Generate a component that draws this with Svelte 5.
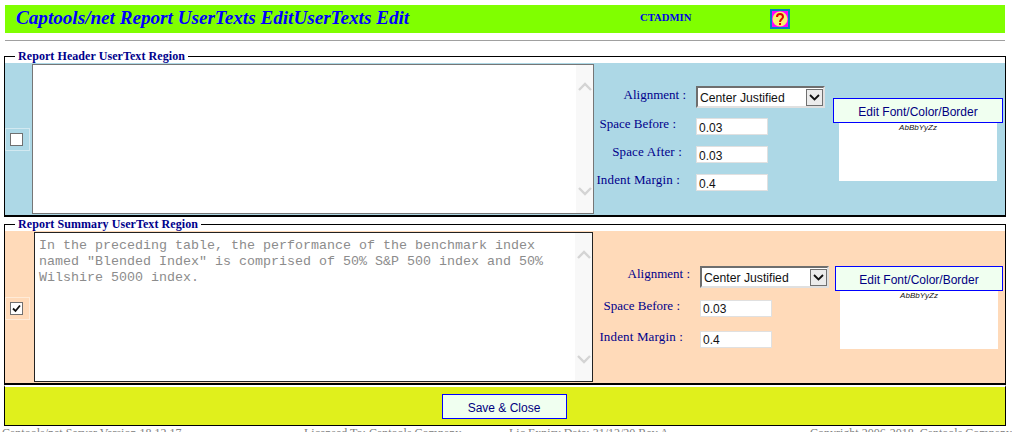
<script>
  // Report user-text editor: two region fieldsets, then the save bar and a footer cut off by the window.
  const regions = [
    {
      title: "Report Header UserText Region",
      tone: "blue",
      checked: false,
      text: "",
      fields: [["Space Before :", "0.03", "sb"], ["Space After :", "0.03", "sa"], ["Indent Margin :", "0.4", "im"]]
    },
    {
      title: "Report Summary UserText Region",
      tone: "peach",
      checked: true,
      text: 'In the preceding table, the performance of the benchmark index\nnamed "Blended Index" is comprised of 50% S&P 500 index and 50%\nWilshire 5000 index.',
      fields: [["Space Before :", "0.03", "sb"], ["Indent Margin :", "0.4", "im"]]
    }
  ];
</script>

<div class="page">
  <header class="title">
    <h1>Captools/net Report UserTexts EditUserTexts Edit</h1>
    <span class="user">CTADMIN</span>
    <svg class="help" width="20" height="20" viewBox="0 0 20 20" aria-label="Help">
      <rect width="20" height="20" fill="#0080c0" />
      <rect x="2" y="2" width="16" height="16" fill="#ff00ff" />
      <circle cx="10" cy="10" r="7.500" fill="#f6f070" />
      <path d="M7 8c0-4 6-4 6 0 0 2-3 2-3 5" fill="none" stroke="#e00000" stroke-width="2" />
      <rect x="9" y="14" width="2" height="2" fill="#e00000" />
    </svg>
  </header>
  <hr />

  {#each regions as r}
    <fieldset class="region {r.tone}">
      <legend>{r.title}</legend>
      <div class="panel">
        <div class="check">
          <div class="cell">
            <span class="box">
              {#if r.checked}
                <svg width="11" height="11" viewBox="0 0 11 11"><path d="M2 5.500l2.500 2.500L9 2.500" fill="none" stroke="#111" stroke-width="1.800" /></svg>
              {/if}
            </span>
          </div>
        </div>
        <div class="textarea">
          <div class="content">{r.text}</div>
          <div class="scroll">
            <svg width="16" height="9" viewBox="0 0 16 9"><path d="M2 8l6-6 6 6" fill="none" stroke="#d4d4d4" stroke-width="2.400" /></svg>
            <svg width="16" height="9" viewBox="0 0 16 9"><path d="M2 1l6 6 6-6" fill="none" stroke="#d4d4d4" stroke-width="2.400" /></svg>
          </div>
        </div>
        <div class="form">
          <div class="row align">
            <label>Alignment :</label>
            <div class="select">
              <span class="value">Center Justified</span>
              <span class="arrow">
                <svg width="11" height="7" viewBox="0 0 11 7"><path d="M1 1l4.500 4.500L10 1" fill="none" stroke="#111" stroke-width="1.800" /></svg>
              </span>
            </div>
          </div>
          {#each r.fields as f}
            <div class="row {f[2]}">
              <label>{f[0]}</label>
              <div class="input">{f[1]}</div>
            </div>
          {/each}
        </div>
        <div class="font">
          <button>Edit Font/Color/Border</button>
          <div class="sample">AbBbYyZz</div>
        </div>
      </div>
    </fieldset>
  {/each}

  <div class="save">
    <button>Save &amp; Close</button>
  </div>

  <footer>
    <span>Captools/net Server Version 18.12.17</span>
    <span>Licensed To: Captools Company</span>
    <span>Lic Expiry Date: 31/12/20 Rev A</span>
    <span>Copyright 2006-2018, Captools Company</span>
  </footer>
</div>

<style>
  :global(body) { margin: 0; background: #fff; overflow: hidden; }
  .page { width: 1012px; height: 432px; overflow: hidden; padding-top: 5px; box-sizing: border-box; font-family: "Liberation Serif", serif; }

  .title { margin: 0 7px 0 5px; height: 28px; background: #80ff00; display: flex; align-items: center; color: #0000ff; }
  h1 { margin: 0 0 0 11px; font-size: 19.15px; font-style: italic; font-weight: bold; width: 624px; line-height: 26px; padding-bottom: 2px; }
  .user { font-size: 10.7px; font-weight: bold; width: 130px; padding-bottom: 4px; color: #0000e6; }
  hr { margin: 7px 7px 0 5px; border: 0; height: 1px; background: #a0a0a0; }

  .region { margin: 8px 6px 0 4px; padding: 0; border: 0; border-top: 1px solid #000; border-left: 1px solid #000; border-right: 1px solid #000; border-bottom: 2px solid #000; min-width: 0; }
  legend { margin-left: 10px; padding: 0 3px; font-size: 12px; font-weight: bold; color: #00008b; line-height: 14px; letter-spacing: 0.07px; }
  .panel { display: flex; height: 152px; }
  .blue .panel { background: #add8e6; }
  .peach .panel { background: #ffdab9; }
  .peach { margin-top: 0; }

  .check { width: 27px; display: flex; align-items: center; }
  .peach .check { width: 29px; }
  .cell { width: 25px; height: 23px; box-sizing: border-box; border: 1px solid rgba(255, 255, 255, 0.45); padding-left: 4px; display: flex; align-items: center; }
  .peach .cell { margin-top: 2px; }
  .box { width: 11px; height: 11px; background: #fff; border: 1px solid #707070; display: flex; align-items: center; justify-content: center; }

  .textarea { width: 560px; height: 148px; margin-top: 1px; border: 1px solid #767676; background: #fff; display: flex; }
  .peach .textarea { width: 557px; border-color: #222; }
  .content { flex: 1; padding: 5px 4px 0; font-family: "Liberation Mono", monospace; font-size: 13.33px; line-height: 16px; color: #8c8c8c; white-space: pre; }
  .scroll { width: 17px; background: #f8f8f8; display: flex; flex-direction: column; justify-content: space-between; align-items: center; padding: 17px 0; }

  .form { width: 239px; padding-top: 21px; box-sizing: border-box; }
  .peach .form { width: 242px; padding-top: 33px; }
  .row { display: grid; grid-template-columns: 102px auto; align-items: center; height: 28px; }
  label { font-size: 13px; color: #00008b; text-align: right; padding-right: 10px; white-space: nowrap; margin-top: -2px; }
  .blue .sb label, .blue .sa label, .blue .im label { margin-top: 0; }
  .sb label { padding-right: 20px; }
  .sa label { padding-right: 14px; letter-spacing: 0.15px; }
  .im label { padding-right: 16px; letter-spacing: 0.15px; }
  .peach .row { grid-template-columns: 107px auto; }
  .peach .im label { padding-right: 17px; }
  .peach .sb { height: 31px; }
  .peach .im { height: 31px; }
  .align { height: 24px; margin-bottom: 2px; }
  .peach .align { margin-bottom: 3px; }
  .peach .align label { margin-top: -5px; }

  .select { width: 123px; height: 18px; margin-top: 2px; border: 2px solid #6e6e6e; border-right-color: #e0e0e0; border-bottom-color: #e0e0e0; background: #fff; display: flex; justify-content: space-between; align-items: center; font: 12.2px "Liberation Sans", sans-serif; padding-left: 2px; box-sizing: content-box; color: #111; }
  .value { padding-top: 2px; }
  .arrow { width: 17px; height: 17px; background: #ececec; border: 1px solid #707070; box-sizing: border-box; display: flex; align-items: center; justify-content: center; }
  .input { width: 66px; height: 15px; padding: 0 2px; border: 1px solid #e0e0e0; background: #fff; font: 12px/17px "Liberation Sans", sans-serif; color: #111; margin-top: 3px; }
  .blue .input { margin-top: 5px; line-height: 18px; }

  .font { display: flex; flex-direction: column; width: 170px; padding-top: 35px; }
  .font button { width: 170px; height: 25px; background: #f0fff0; border: 1px solid #0000ff; font: 12px "Liberation Sans", sans-serif; color: #000080; padding: 2px 0 0; }
  .sample { width: 158px; height: 58px; margin-left: 6px; background: #fff; text-align: center; font: italic 8px "Liberation Sans", sans-serif; color: #111; line-height: 10px; }
  .peach .font { width: 168px; }
  .peach .font button { width: 168px; }
  .peach .sample { margin-left: 5px; }

  .save { margin: 0 6px 0 4px; height: 38px; border: 1px solid #000; border-top: 2px solid #fff; background: #e0f01c; display: flex; align-items: center; justify-content: center; background-clip: padding-box; }
  .save button { width: 125px; height: 25px; background: #f0fff0; border: 1px solid #0000ff; font: 12px "Liberation Sans", sans-serif; color: #000080; padding: 2px 0 0; margin: 1px 2px 0 0; }

  footer { height: 16px; font-size: 12px; color: #808080; line-height: 12px; display: grid; grid-template-columns: 302px 205px 301px auto; padding: 1px 0 0 2px; }
</style>
